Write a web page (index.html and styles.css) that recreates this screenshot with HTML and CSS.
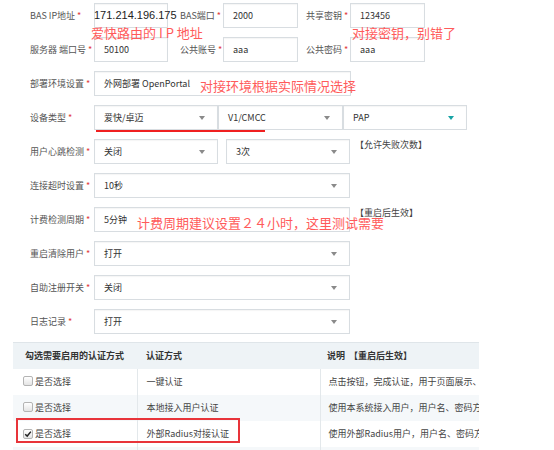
FILE: index.html
```html
<!DOCTYPE html>
<html lang="zh">
<head>
<meta charset="utf-8">
<link rel="stylesheet" href="styles.css">
</head>
<body>
<div class="form">
  <div class="row">
    <span class="lbl">BAS IP地址<i>*</i></span>
    <div class="box w74 ip"><span class="ipval">171.214.196.175</span><span class="caret"></span></div>
    <span class="lbl l2">BAS端口<i>*</i></span>
    <div class="box w75">2000</div>
    <span class="lbl l3">共享密钥<i>*</i></span>
    <div class="box w75">123456</div>
  </div>
  <div class="row">
    <span class="lbl">服务器 端口号<i>*</i></span>
    <div class="box w74">50100</div>
    <span class="lbl l2">公共账号<i>*</i></span>
    <div class="box w75">aaa</div>
    <span class="lbl l3">公共密码<i>*</i></span>
    <div class="box w75">aaa</div>
  </div>
  <div class="row">
    <span class="lbl">部署环境设置<i>*</i></span>
    <div class="box w257">外网部署 OpenPortal</div>
  </div>
  <div class="row">
    <span class="lbl">设备类型<i>*</i></span>
    <div class="box sel w124">爱快/卓迈</div>
    <div class="box sel w125">V1/CMCC</div>
    <div class="box sel teal w124">PAP</div>
  </div>
  <div class="row">
    <span class="lbl">用户心跳检测<i>*</i></span>
    <div class="box sel w124">关闭</div>
    <div class="box sel w124 gap8">3次</div>
    <span class="note">【允许失败次数】</span>
  </div>
  <div class="row">
    <span class="lbl">连接超时设置<i>*</i></span>
    <div class="box sel w256">10秒</div>
  </div>
  <div class="row">
    <span class="lbl">计费检测周期<i>*</i></span>
    <div class="box w256">5分钟</div>
    <span class="note">【重启后生效】</span>
  </div>
  <div class="row">
    <span class="lbl">重启清除用户<i>*</i></span>
    <div class="box sel w256">打开</div>
  </div>
  <div class="row">
    <span class="lbl">自助注册开关<i>*</i></span>
    <div class="box sel w256">关闭</div>
  </div>
  <div class="row">
    <span class="lbl">日志记录<i>*</i></span>
    <div class="box sel w256">打开</div>
  </div>

  <span class="ann a1">爱快路由的 I P 地址</span>
  <span class="ann a2">对接密钥，别错了</span>
  <span class="ann a3">对接环境根据实际情况选择</span>
  <span class="ann a4">计费周期建议设置２４小时，这里测试需要</span>
  <span class="uline"></span>
</div>

<div class="tablewrap">
  <table class="auth">
    <colgroup><col class="c1"><col class="c2"><col class="c3"></colgroup>
    <thead>
      <tr><th>勾选需要启用的认证方式</th><th>认证方式</th><th>说明 &nbsp;【重启后生效】</th></tr>
    </thead>
    <tbody>
      <tr><td><span class="cb"></span>是否选择</td><td>一键认证</td><td>点击按钮，完成认证，用于页面展示、</td></tr>
      <tr class="alt"><td><span class="cb"></span>是否选择</td><td>本地接入用户认证</td><td>使用本系统接入用户，用户名、密码方式认证</td></tr>
      <tr><td><span class="cb on"><svg viewBox="0 0 10 10" width="8" height="8"><path d="M1.5 5.2 L4 7.6 L8.6 2" fill="none" stroke="#222" stroke-width="1.8"/></svg></span>是否选择</td><td>外部Radius对接认证</td><td>使用外部Radius用户，用户名、密码方式认证</td></tr>
      <tr class="alt"><td><span class="cb"></span>是否选择</td><td>微信认证</td><td>使用微信关注公众号认证</td></tr>
    </tbody>
  </table>
  <span class="redbox"></span>
</div>
</body>
</html>
```

FILE: styles.css
```css
html, body {
  margin: 0;
  padding: 0;
  background: #fff;
}
body {
  width: 554px;
  height: 450px;
  overflow: hidden;
  font-family: "Noto Sans CJK SC", "Liberation Sans", sans-serif;
  color: #333;
}
.form {
  position: relative;
  padding: 3px 0 0 30px;
  display: flex;
  flex-direction: column;
  gap: 9px;
}
.row {
  display: flex;
  align-items: center;
  height: 25px;
}
.lbl {
  width: 64px;
  flex: none;
  font-size: 9px;
  line-height: 13px;
  color: #555;
  white-space: nowrap;
}
.lbl i {
  font-style: normal;
  color: #e23b3b;
  margin-left: 2px;
}
.lbl.l2 { width: 43px; margin-left: 12px; }
.lbl.l3 { width: 44px; margin-left: 8px; }
.box {
  position: relative;
  flex: none;
  box-sizing: border-box;
  height: 25px;
  border: 1px solid #d8dde1;
  box-shadow: inset 0 1px 1px rgba(0,0,0,0.04);
  background: #fff;
  padding: 0 9px;
  display: flex;
  align-items: center;
  font-size: 9px;
  line-height: 13px;
  color: #333;
  white-space: nowrap;
}
.w74 { width: 74px; }
.w75 { width: 75px; }
.w124 { width: 124px; }
.w125 { width: 125px; }
.w256 { width: 256px; }
.w257 { width: 257px; }
.gap8 { margin-left: 8px; }
.box.ip {
  overflow: visible;
  padding-left: 0;
}
.ipval {
  font-family: "Liberation Sans", "Noto Sans CJK SC", sans-serif;
  font-size: 11px;
  color: #222;
  margin-left: -1px;
}
.caret {
  display: inline-block;
  width: 1px;
  height: 16px;
  background: #444;
  margin-left: 1px;
}
.box.sel::after {
  content: "";
  position: absolute;
  right: 12px;
  top: 50%;
  margin-top: -2px;
  border-left: 3.5px solid transparent;
  border-right: 3.5px solid transparent;
  border-top: 4px solid #8a8a8a;
}
.box.sel.teal::after {
  border-top-color: #17a3a5;
}
.note {
  align-self: flex-start;
  margin: -1px 0 0 5px;
  font-size: 9px;
  line-height: 13px;
  color: #444;
  white-space: nowrap;
}
.ann {
  position: absolute;
  font-size: 13px;
  line-height: 16px;
  color: #ff5b5b;
  white-space: nowrap;
}
.a1 { left: 91px; top: 25px; }
.a2 { left: 352px; top: 25px; }
.a3 { left: 200px; top: 78px; }
.a4 { left: 137px; top: 215px; }
.uline {
  position: absolute;
  left: 96px;
  top: 130px;
  width: 169px;
  height: 2px;
  background: #f02020;
}
.tablewrap {
  position: relative;
  margin: 8px 0 0 13px;
  width: 466px;
}
.auth {
  width: 466px;
  table-layout: fixed;
  border-collapse: collapse;
  font-size: 9px;
}
.c1 { width: 124px; }
.c2 { width: 183px; }
.c3 { width: 159px; }
.auth th, .auth td {
  height: 26px;
  box-sizing: border-box;
  padding: 0 0 0 9px;
  text-align: left;
  white-space: nowrap;
  overflow: hidden;
  line-height: 13px;
}
.auth th {
  background: #eef3f6;
  border-top: 1px solid #dfe5e9;
  font-weight: bold;
  color: #333;
}
.auth th:first-child { padding-left: 12px; }
.auth th:last-child { padding-left: 7px; }
.auth td {
  color: #444;
  border-left: 1px solid #e3e8eb;
}
.auth td:first-child {
  border-left: none;
  padding-left: 10px;
}
.auth td:last-child { padding-left: 8px; }
.auth tr.alt td { background: #f5f8fa; }
.cb {
  display: inline-flex;
  align-items: center;
  justify-content: center;
  vertical-align: -1px;
  box-sizing: border-box;
  width: 10px;
  height: 10px;
  border: 1px solid #b4b4b4;
  border-radius: 2px;
  background: linear-gradient(#ffffff, #e4e4e4);
  margin-right: 2px;
}
.redbox {
  position: absolute;
  left: 3px;
  top: 76px;
  width: 224px;
  height: 25px;
  box-sizing: border-box;
  border: 2px solid #e8343a;
}
```
